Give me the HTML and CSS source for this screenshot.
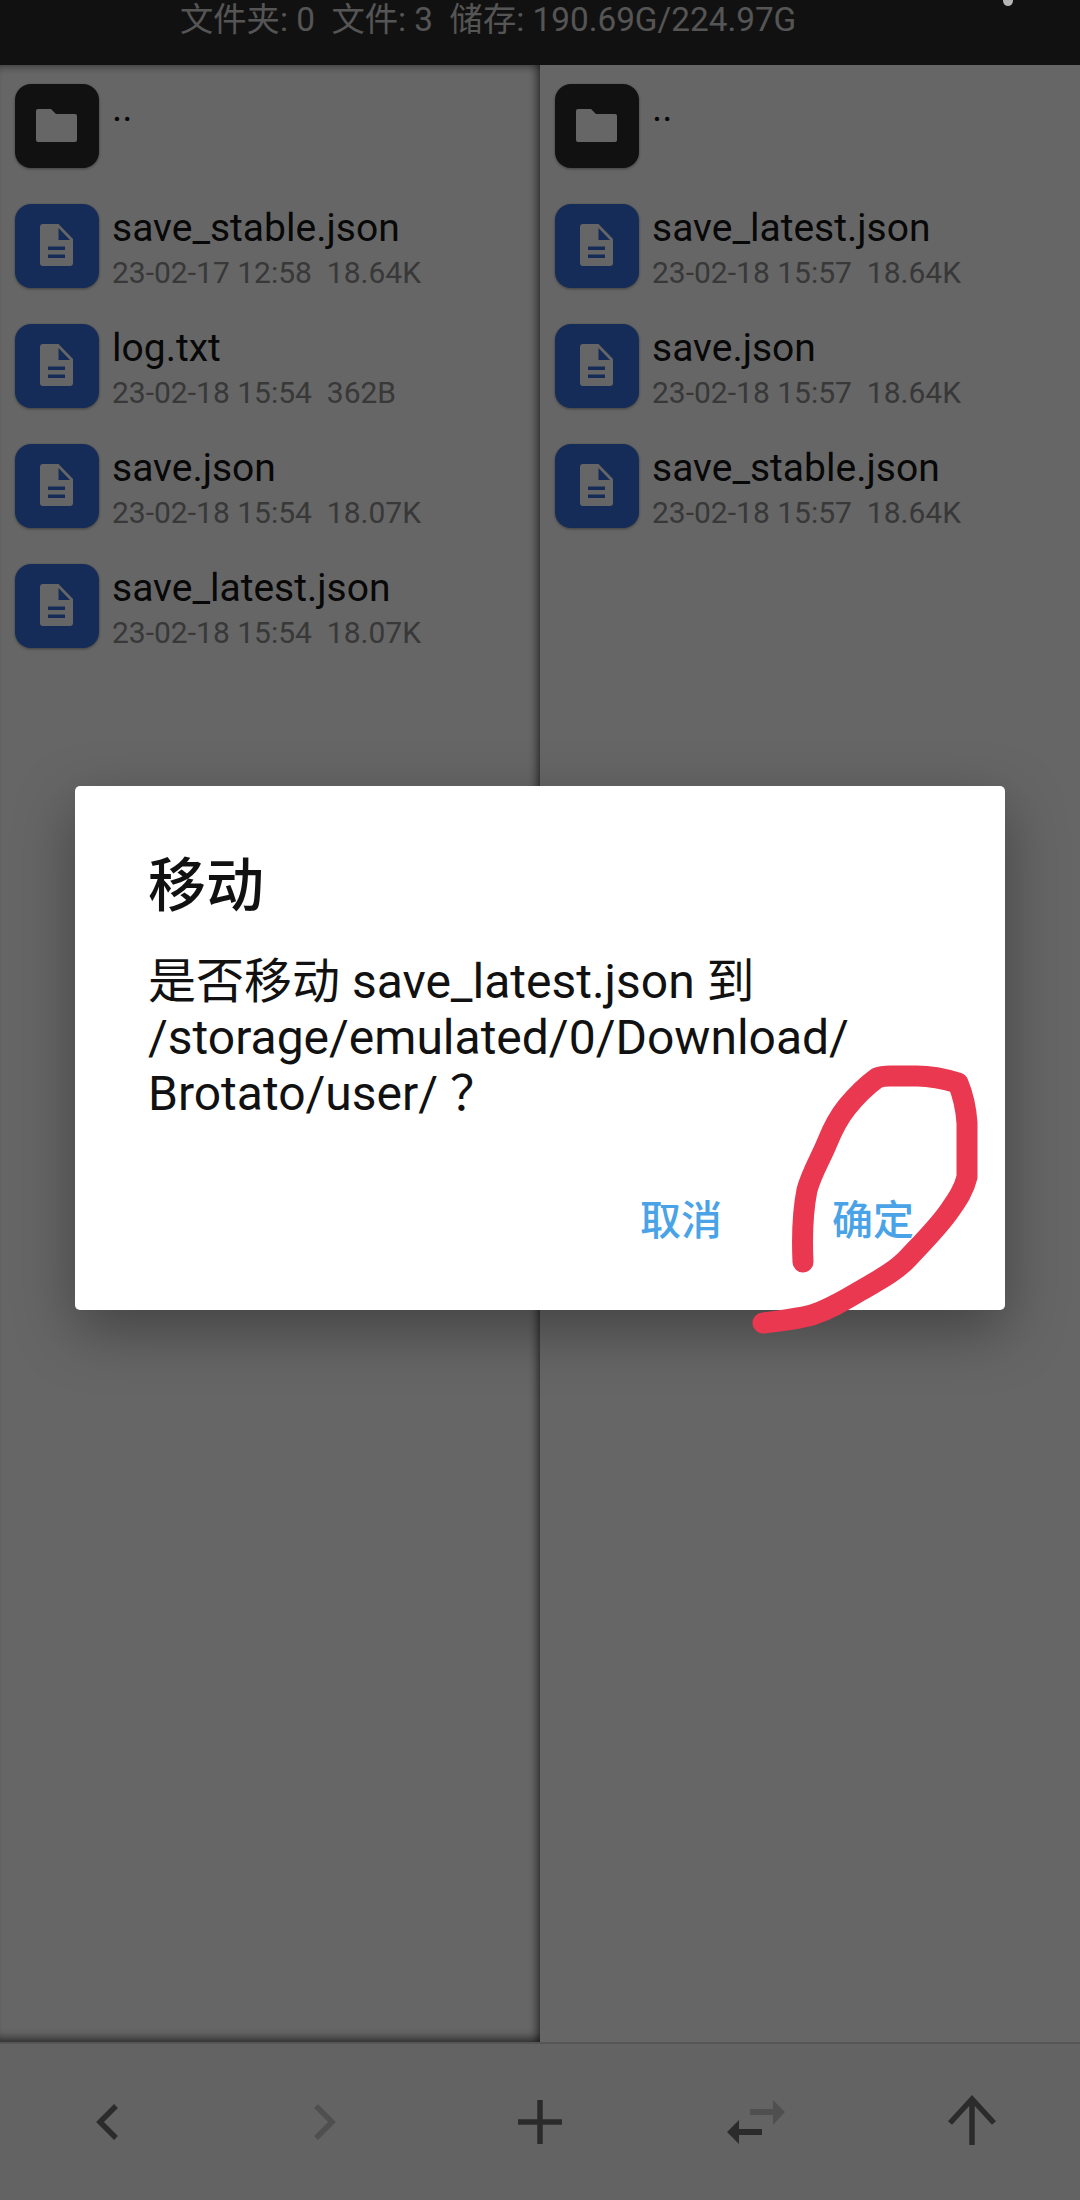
FILE: index.html
```html
<!DOCTYPE html>
<html lang="zh-CN">
<head>
<meta charset="utf-8">
<title>移动</title>
<link rel="stylesheet" href="styles.css">
</head>
<body>
<svg class="defs" width="0" height="0" aria-hidden="true">
  <symbol id="doc" viewBox="0 0 84 84">
    <path fill="#fff" fill-rule="evenodd" d="M28 20H43.5L58 35V59a3 3 0 0 1-3 3H28a3 3 0 0 1-3-3V23a3 3 0 0 1 3-3ZM43.5 24V36H55ZM33 42.5V46H50V42.5ZM33 50.5V54H50V50.5Z"/>
  </symbol>
  <symbol id="folder" viewBox="0 0 84 84">
    <path fill="#fff" d="M23 25H36L41 30H60a2 2 0 0 1 2 2V56a2 2 0 0 1-2 2H23a2 2 0 0 1-2-2V27a2 2 0 0 1 2-2Z"/>
  </symbol>
</svg>

<header class="topbar"><span class="stats">文件夹: 0  文件: 3  储存: 190.69G/224.97G</span></header>

<main class="panes">
  <section class="pane pane-left">
    <div class="row"><div class="tile tile-folder"><svg class="glyph"><use href="#folder"/></svg></div><div class="info"><div class="name">..</div></div></div>
    <div class="row"><div class="tile"><svg class="glyph"><use href="#doc"/></svg></div><div class="info"><div class="name">save_stable.json</div><div class="meta">23-02-17 12:58  18.64K</div></div></div>
    <div class="row"><div class="tile"><svg class="glyph"><use href="#doc"/></svg></div><div class="info"><div class="name">log.txt</div><div class="meta">23-02-18 15:54  362B</div></div></div>
    <div class="row"><div class="tile"><svg class="glyph"><use href="#doc"/></svg></div><div class="info"><div class="name">save.json</div><div class="meta">23-02-18 15:54  18.07K</div></div></div>
    <div class="row"><div class="tile"><svg class="glyph"><use href="#doc"/></svg></div><div class="info"><div class="name">save_latest.json</div><div class="meta">23-02-18 15:54  18.07K</div></div></div>
  </section>
  <section class="pane pane-right">
    <div class="row"><div class="tile tile-folder"><svg class="glyph"><use href="#folder"/></svg></div><div class="info"><div class="name">..</div></div></div>
    <div class="row"><div class="tile"><svg class="glyph"><use href="#doc"/></svg></div><div class="info"><div class="name">save_latest.json</div><div class="meta">23-02-18 15:57  18.64K</div></div></div>
    <div class="row"><div class="tile"><svg class="glyph"><use href="#doc"/></svg></div><div class="info"><div class="name">save.json</div><div class="meta">23-02-18 15:57  18.64K</div></div></div>
    <div class="row"><div class="tile"><svg class="glyph"><use href="#doc"/></svg></div><div class="info"><div class="name">save_stable.json</div><div class="meta">23-02-18 15:57  18.64K</div></div></div>
  </section>
</main>

<nav class="toolbar">
  <div class="tool"><svg class="tool-icon" viewBox="0 0 64 64"><path class="ink" d="M40 16 24 32 40 48"/></svg></div>
  <div class="tool"><svg class="tool-icon" viewBox="0 0 64 64"><path class="ink faded" d="M24 16 40 32 24 48"/></svg></div>
  <div class="tool"><svg class="tool-icon" viewBox="0 0 64 64"><path class="ink" d="M32 10V54M10 32H54"/></svg></div>
  <div class="tool"><svg class="tool-icon" viewBox="0 0 64 64">
    <path class="solid faded-fill" d="M26 19H49V10L61 22 49 35V25H26Z"/>
    <path class="solid" d="M38 39H15V30L3 42 15 54V45H38Z"/>
  </svg></div>
  <div class="tool"><svg class="tool-icon" viewBox="0 0 64 64"><path class="ink" d="M10 33 32 9 54 33M32 9V55"/></svg></div>
</nav>

<div class="scrim">
  <span class="status-dot"></span>
  <div class="dialog">
    <h1 class="dialog-title">移动</h1>
    <p class="dialog-body">是否移动 save_latest.json 到<br>/storage/emulated/0/Download/<br>Brotato/user/ ？</p>
    <div class="dialog-actions"><span class="action">取消</span><span class="action">确定</span></div>
  </div>
  <svg class="scribble" width="1080" height="2200" viewBox="0 0 1080 2200"><path d="M803 1262C802 1240 803 1210 807 1190 812 1172 820 1160 827 1143 833 1128 838 1118 847 1107 856 1096 866 1086 877 1078 882 1076 885 1076 890 1076H917C932 1076 945 1079 958 1083 963 1095 966 1108 967 1123V1177C964 1190 957 1200 950 1210 940 1225 925 1240 908 1258 895 1272 877 1281 860 1291 843 1301 830 1309 812 1315 797 1319 780 1321 763 1323"/></svg>
</div>
</body>
</html>
```
FILE: styles.css
```css
* { box-sizing: border-box; }
html, body { margin: 0; padding: 0; }
body {
  position: relative;
  width: 1080px;
  height: 2200px;
  overflow: hidden;
  display: flex;
  flex-direction: column;
  background: #fff;
  font-family: Roboto, "Noto Sans CJK SC", sans-serif;
}
.defs { position: absolute; }

.topbar {
  flex: 0 0 65px;
  background: #2b2b2b;
  padding-left: 180px;
  color: #d4d4d4;
  font-size: 33.3px;
  line-height: 40px;
}
.stats { white-space: pre; }

.panes { flex: 1; display: flex; min-height: 0; }
.pane { width: 540px; padding-top: 19px; display: flex; flex-direction: column; gap: 36px; }
.pane-left {
  box-shadow: inset -9px 0 8px -6px rgba(0,0,0,.55), inset 0 -12px 10px -8px rgba(0,0,0,.55), inset 0 8px 8px -6px rgba(0,0,0,.4);
}

.row { display: flex; gap: 13px; padding-left: 15px; height: 84px; }
.tile {
  flex: 0 0 84px;
  height: 84px;
  border-radius: 16px;
  background: #346ed9;
  box-shadow: 0 1px 3px rgba(0,0,0,.4);
}
.tile-folder { background: #2b2b2b; }
.glyph { display: block; width: 84px; height: 84px; }
.info { display: flex; flex-direction: column; padding-top: 3px; }
.name { font-size: 39px; line-height: 42px; color: #141414; }
.meta { margin-top: 5px; font-size: 30px; line-height: 38px; color: #8c8c8c; white-space: pre; }

.toolbar {
  flex: 0 0 158px;
  display: flex;
  align-items: center;
  background: #f7f7f7;
  border-top: 2px solid #d8d8d8;
}
.tool { flex: 1; display: flex; justify-content: center; }
.tool-icon { width: 64px; height: 64px; display: block; }
.ink { fill: none; stroke: #6c6c6c; stroke-width: 5.5; stroke-linejoin: miter; }
.faded { stroke: #c6c6c6; }
.solid { fill: #6c6c6c; }
.faded-fill { fill: #c6c6c6; }

.scrim {
  position: absolute;
  inset: 0;
  background: rgba(0,0,0,.6);
  padding: 786px 75px 0;
}
.status-dot {
  position: absolute;
  left: 1003px;
  top: -5px;
  width: 10px;
  height: 11px;
  border-radius: 50%;
  background: #b5b5b5;
}
.dialog {
  height: 524px;
  background: #fff;
  border-radius: 5px;
  box-shadow: 0 20px 60px rgba(0,0,0,.35);
  padding: 68px 0 0 73px;
  color: #111;
}
.dialog-title { margin: 0; font-size: 58px; line-height: 64px; font-weight: 500; }
.dialog-body { margin: 36px 0 0; font-size: 48px; line-height: 56px; }
.dialog-actions {
  display: flex;
  justify-content: flex-end;
  gap: 110px;
  margin-top: 75px;
  padding-right: 91px;
}
.action { font-size: 41px; line-height: 48px; font-weight: 500; color: #4aa3e6; }
.scribble { position: absolute; inset: 0; }
.scribble path { fill: none; stroke: #e9384f; stroke-width: 21; stroke-linecap: round; stroke-linejoin: round; }
```
